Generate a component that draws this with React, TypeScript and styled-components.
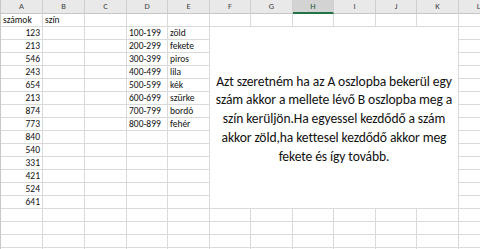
import React, { FunctionComponent } from 'react';
import styled, { createGlobalStyle } from 'styled-components';

const GlobalStyle = createGlobalStyle`
  html, body {
    margin: 0;
    padding: 0;
    background: #ffffff;
  }
  body {
    font-family: Carlito, Lato, "Liberation Sans", sans-serif;
    overflow: hidden;
  }
`;

const columns = ['A', 'B', 'C', 'D', 'E', 'F', 'G', 'H', 'I', 'J', 'K', 'L'];
const widths = [42, 42, 42, 41, 42, 41, 42, 41, 42, 41, 42, 40];

const numbers = ['123', '213', '546', '243', '654', '213', '874', '773', '840', '540', '331', '421', '524', '641'];
const ranges: [string, string][] = [
  ['100-199', 'zöld'],
  ['200-299', 'fekete'],
  ['300-399', 'piros'],
  ['400-499', 'lila'],
  ['500-599', 'kék'],
  ['600-699', 'szürke'],
  ['700-799', 'bordó'],
  ['800-899', 'fehér'],
];

const boxLines = [
  'Azt szeretném ha az A oszlopba bekerül egy',
  'szám akkor a mellete lévő B oszlopba meg a',
  'szín kerüljön.Ha egyessel kezdődő a szám',
  'akkor zöld,ha kettesel kezdődő akkor meg',
  'fekete és így tovább.',
];

const ROWS = 19;

const Sheet = styled.div`
  display: grid;
  grid-template-columns: ${widths.map((w) => `${w}px`).join(' ')};
  grid-template-rows: 14px repeat(${ROWS}, 13px);
  border-left: 1px solid #c8c8c8;
  width: 480px;
  height: 249px;
  overflow: hidden;
`;

const HeaderCell = styled.div<{ $active?: boolean }>`
  box-sizing: border-box;
  background: ${(p) => (p.$active ? '#d3d3d3' : '#e9e9e9')};
  border-right: 1px solid #cfcfcf;
  border-bottom: ${(p) => (p.$active ? '2px solid #217346' : '1px solid #c6c6c6')};
  color: ${(p) => (p.$active ? '#1e5b37' : '#444444')};
  font-size: 8.5px;
  display: flex;
  align-items: center;
  justify-content: center;
  line-height: 1;
`;

const Cell = styled.div<{ $align?: 'left' | 'right' }>`
  box-sizing: border-box;
  border-right: 1px solid #dadada;
  border-bottom: 1px solid #dadada;
  font-size: 9.5px;
  color: #111111;
  line-height: 12px;
  padding: 0 2px;
  text-align: ${(p) => p.$align || 'left'};
  white-space: nowrap;
  overflow: visible;
`;

const TextBox = styled.div`
  grid-column: 6 / 12;
  grid-row: 3 / 17;
  box-sizing: border-box;
  background: #ffffff;
  border-right: 1px solid #dadada;
  border-bottom: 1px solid #dadada;
  display: flex;
  flex-direction: column;
  align-items: center;
  justify-content: center;
  text-align: center;
  font-size: 13.6px;
  letter-spacing: -0.1px;
  line-height: 18.8px;
  color: #111111;
  padding: 4px 0 0;
  white-space: nowrap;
`;

const cellContent = (row: number, col: number): { text: string; align?: 'left' | 'right' } => {
  if (row === 1) {
    if (col === 0) return { text: 'számok' };
    if (col === 1) return { text: 'szín' };
    return { text: '' };
  }
  const i = row - 2;
  if (col === 0 && numbers[i]) return { text: numbers[i], align: 'right' };
  if (col === 3 && ranges[i]) return { text: ranges[i][0] };
  if (col === 4 && ranges[i]) return { text: ranges[i][1] };
  return { text: '' };
};

const inTextBox = (row: number, col: number) => row >= 2 && row <= 15 && col >= 5 && col <= 10;

const App: FunctionComponent = () => {
  const cells: React.ReactNode[] = [];
  for (let row = 1; row <= ROWS; row++) {
    columns.forEach((_, col) => {
      if (inTextBox(row, col)) return;
      const { text, align } = cellContent(row, col);
      cells.push(
        <Cell key={`${row}-${col}`} $align={align} style={{ gridRow: row + 1, gridColumn: col + 1 }}>
          {text}
        </Cell>
      );
    });
  }

  return (
    <>
      <GlobalStyle />
      <Sheet>
        {columns.map((c) => (
          <HeaderCell key={c} $active={c === 'H'}>
            {c}
          </HeaderCell>
        ))}
        {cells}
        <TextBox>
          {boxLines.map((line) => (
            <div key={line}>{line}</div>
          ))}
        </TextBox>
      </Sheet>
    </>
  );
};

export default App;
